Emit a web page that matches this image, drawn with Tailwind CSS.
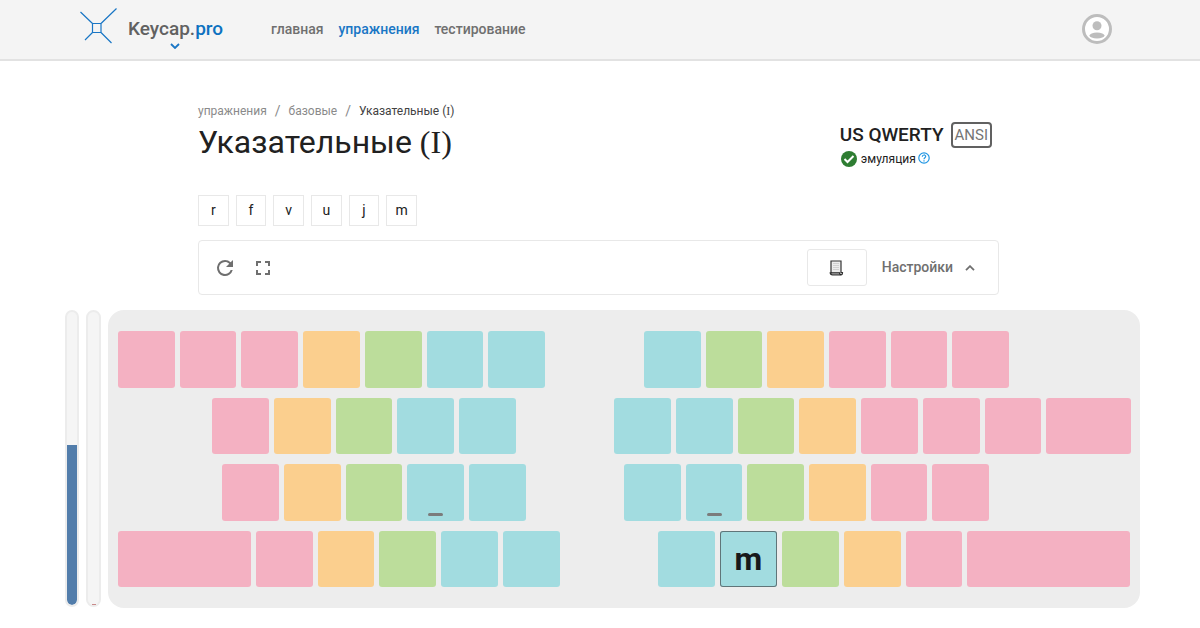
<!DOCTYPE html>
<html lang="ru">
<head>
<meta charset="utf-8">
<meta name="viewport" content="width=device-width, initial-scale=1">
<title>Keycap.pro</title>
<script src="https://cdn.jsdelivr.net/npm/@tailwindcss/browser@4"></script>
</head>
<body class="bg-white font-[Roboto,sans-serif] text-[#212121]">
<header class="flex h-[61px] items-center border-b-2 border-[#e2e2e2] bg-[#f4f4f4] pb-px pl-[80px] pr-[87px]">
  <a href="#" class="relative flex items-center gap-[10px] text-[19px] font-medium text-[#616161]" aria-label="Keycap.pro">
    <svg class="-mt-2 h-[38px] w-[38px]" viewBox="0 0 38 38" fill="none" stroke="#1976c5" stroke-width="1.2"><path d="M12.500 19.500h8.500v9h-8.500zM12.500 19.500L.5 8M21 19.500L36.500 4.500M12.500 28.500L5 36M21 28.500L31.500 39" transform="translate(0 -2)"/></svg>
    <span>Keycap.<span class="text-[#0d72c0]">pro</span></span>
    <svg class="absolute left-[90px] top-[29px] h-[6px] w-[10px]" viewBox="0 0 10 6" fill="none" stroke="#1976c5" stroke-width="1.800"><path d="M1 1l4 4 4-4"/></svg>
  </a>
  <nav class="ml-12 flex gap-[15px] text-[14px] font-medium text-[#6f6f6f]">
    <a href="#">главная</a>
    <a href="#" class="text-[#1976c5]">упражнения</a>
    <a href="#">тестирование</a>
  </nav>
  <button class="ml-auto" aria-label="Профиль">
    <svg class="h-[32px] w-[32px]" viewBox="0 0 32 32"><circle cx="16" cy="16" r="13.500" fill="#fff" stroke="#bdbdbd" stroke-width="3"/><circle cx="16" cy="12.800" r="4.500" fill="#bdbdbd"/><ellipse cx="16" cy="22.500" rx="7.500" ry="3" fill="#bdbdbd"/></svg>
  </button>
</header>
<main>
  <div class="pl-[198px] pr-[201px]">
    <div class="flex justify-between pt-[42px]">
      <div>
        <nav class="flex items-center gap-2 text-[12px] leading-4 text-[#8a8a8a]">
          <a href="#">упражнения</a><span class="text-[14px]">/</span><a href="#">базовые</a><span class="text-[14px]">/</span><span class="text-[#424242]">Указательные (<span class="font-[Liberation_Serif,serif]">I</span>)</span>
        </nav>
        <h1 class="mt-1 text-[32px] leading-[38px]">Указательные <span class="font-[Liberation_Serif,serif]">(I)</span></h1>
      </div>
      <div class="mr-[7px] pt-[19px]">
        <div class="flex items-center gap-[7px]"><span class="text-[19px] font-medium leading-6">US QWERTY</span><span class="flex h-[26px] items-center rounded-[4px] border-2 border-[#616161] px-[2px] text-[15px] text-[#757575]">ANSI</span></div>
        <div class="mt-[3px] flex items-center gap-1 text-[12px] leading-4">
          <svg class="ml-px h-[16px] w-[16px]" viewBox="0 0 16 16"><circle cx="8" cy="8" r="8" fill="#2e7d32"/><path d="M3.500 8l3 3 6-6" fill="none" stroke="#fff" stroke-width="2"/></svg>
          <span>эмуляция</span>
          <button class="-mt-[2px] -ml-[2px]" aria-label="Справка"><svg class="h-[12px] w-[12px]" viewBox="0 0 12 12" fill="none" stroke="#2196e3" stroke-width="1.200"><circle cx="6" cy="6" r="5.200"/><path d="M4.300 4.800C4.300 2.400 7.700 2.400 7.700 4.600C7.700 5.800 6 5.900 6 7.300M6 8.200v1.200"/></svg></button>
        </div>
      </div>
    </div>
    <ul class="mt-[28px] flex w-[219px] gap-[7px] text-[14px] *:grid *:h-[31px] *:flex-1 *:place-items-center *:border *:border-[#e8e8e8]">
      <li>r</li><li>f</li><li>v</li><li>u</li><li>j</li><li>m</li>
    </ul>
    <section class="mt-[14px] flex h-[55px] items-center rounded-[4px] border border-[#e8e8e8] pl-[14px] pr-[23px] text-[#6f6f6f]">
      <button aria-label="Обновить"><svg class="h-[24px] w-[24px]" viewBox="0 0 24 24" fill="currentColor"><path d="M17.650 6.350A7.960 7.960 0 0 0 12 4a8 8 0 1 0 7.730 10h-2.080A6 6 0 1 1 12 6c1.660 0 3.140.69 4.220 1.780L13 11h7V4z"/></svg></button>
      <button class="ml-[14px]" aria-label="На весь экран"><svg class="h-[24px] w-[24px]" viewBox="0 0 24 24" fill="currentColor"><path d="M7 14H5v5h5v-2H7zM5 10h2V7h3V5H5zM17 17h-3v2h5v-5h-2zM14 5v2h3v3h2V5z"/></svg></button>
      <button class="ml-auto grid h-[37px] w-[60px] place-items-center rounded-[3px] border border-[#e8e8e8]" aria-label="Текст"><svg class="h-[16px] w-[15px]" viewBox="0 0 15 16" fill="none"><path d="M2 1h10v11.500h1.500c0 1.500-.5 2.300-1.500 2.300H3.500C2 14.800 1.200 14 1.200 12.800H2z" fill="#ececec" stroke="#333" stroke-width="1.200"/><path d="M2 12.800h8.500c0 1 .5 1.700 1.500 2" stroke="#222" stroke-width="1.200"/><path d="M4 3.500h6M4 5.500h6M4 7.500h6M4 9.500h6" stroke="#d0d0d0"/></svg></button>
      <button class="ml-[15px] flex items-center gap-3 text-[14px] font-medium">Настройки<svg class="h-[6px] w-[10px]" viewBox="0 0 10 6" fill="none" stroke="currentColor" stroke-width="1.800"><path d="M1 5.200l4-4 4 4"/></svg></button>
    </section>
  </div>
  <div class="mt-[15px] flex h-[298px] pl-[65px] pr-[60px]">
    <div class="flex h-[297px] w-[14px] flex-col justify-end overflow-hidden rounded-full border-2 border-[#ececec] bg-[#f5f5f5]"><div class="h-[160px] rounded-b-full bg-[#527dab]"></div></div>
    <div class="ml-[7px] flex h-[297px] w-[15px] items-end justify-center rounded-full border-2 border-[#ececec] bg-[#f5f5f5]"><div class="h-px w-1 bg-[#c98a8a]"></div></div>
    <div id="board" class="ml-[7px] flex flex-1 flex-col gap-[10px] rounded-[16px] bg-[#ededed] pb-[21px] pl-[10px] pr-[9px] pt-[21px]"></div>
  </div>
</main>
<script>
const colors = {p:'bg-[#f4b1c2]', o:'bg-[#fbcf8e]', g:'bg-[#bcdd9b]', b:'bg-[#a2dce0]'};
// Each row: left offset, left-hand keys and their width, split, right-hand keys and their width, right offset.
const rows = [
  [0, ['pppogbb', 427], 99, ['bgoppp', 365], 122],
  [94, ['pogbb', 304], 98, ['bbgopppP:85', 517], 0],
  [104, ['pogBb', 304], 98, ['bBgopp', 365], 142],
  [0, ['P:133pogbb', 442], 98, ['bMgopP:163', 472], 1]
];
function keyGroup([spec, width]) {
  const group = document.createElement('div');
  group.className = 'flex gap-[5px]';
  group.style.flex = width + ' 1 0px';
  spec.match(/[A-Za-z](:\d+)?/g).forEach(k => {
    const w = k.includes(':') ? +k.slice(2) : 57;
    const el = document.createElement('div');
    const color = k[0] === 'M' ? colors.b : colors[k[0].toLowerCase()];
    el.className = 'flex justify-center rounded-[3px] ' + (k === 'B' ? 'items-end pb-[5px] ' : 'items-center ') + color;
    el.style.flex = w + ' 1 0px';
    if (k === 'B') el.innerHTML = '<span class="h-[3px] w-[15px] rounded-sm bg-[#7b7b7b]"></span>';
    if (k === 'M') { el.className += ' ring-1 ring-inset ring-[#607579] text-[32px] leading-none font-bold text-[#17191b]'; el.textContent = 'm'; }
    group.append(el);
  });
  return group;
}
rows.forEach(row => {
  const line = document.createElement('div');
  line.className = 'flex flex-1';
  row.forEach(part => {
    if (Array.isArray(part)) return line.append(keyGroup(part));
    const space = document.createElement('div');
    space.style.flex = part + ' 1 0px';
    line.append(space);
  });
  document.getElementById('board').append(line);
});
</script>
</body>
</html>
